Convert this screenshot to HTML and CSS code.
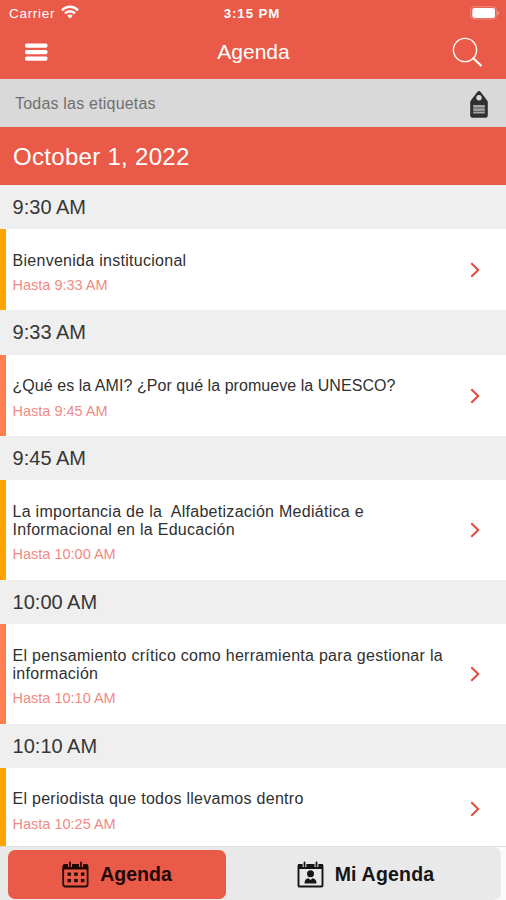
FILE: index.html
```html
<!DOCTYPE html>
<html lang="es">
<head>
<meta charset="utf-8">
<title>Agenda</title>
<link rel="stylesheet" href="styles.css">
</head>
<body>
<div class="app">
  <header class="header">
    <div class="status">
      <div class="carrier"><span>Carrier</span>
        <svg width="18" height="14" viewBox="0 0 18 14" fill="none" stroke="#fff" stroke-width="2.5"><path d="M1 5.3C5.5.5 12.5.5 17 5.3M4 8.4C6.8 5.5 11.2 5.5 14 8.4"/><path d="M9 13.5 6.3 10.7Q9 8.5 11.7 10.7Z" fill="#fff" stroke="none"/></svg>
      </div>
      <div class="clock">3:15 PM</div>
      <svg class="battery" width="30" height="14" viewBox="0 0 30 14"><rect x=".7" y=".7" width="25.6" height="12.4" rx="3.2" fill="none" stroke="#f08a7c"/><rect x="2.3" y="2" width="22.7" height="10" rx="2" fill="#fff"/><path d="M27.5 4.7Q30 7 27.5 9.2Z" fill="#f6b5aa"/></svg>
    </div>
    <div class="navbar">
      <svg class="menu" width="24" height="18" viewBox="0 0 24 18" fill="#fff"><rect x="1" y=".5" width="22.5" height="4.2" rx="1.6"/><rect x="1" y="7" width="22.5" height="4.2" rx="1.6"/><rect x="1" y="13.5" width="22.5" height="4.2" rx="1.6"/></svg>
      <h1 class="title">Agenda</h1>
      <svg class="search" width="31" height="31" viewBox="0 0 31 31" fill="none" stroke="#fff"><circle cx="13" cy="13" r="11.6" stroke-width="1.4"/><path d="M20.8 20.8 29.5 29" stroke-width="2.2"/></svg>
    </div>
  </header>
  <div class="filter"><span>Todas las etiquetas</span>
    <svg width="18" height="27" viewBox="0 0 18 27"><path fill-rule="evenodd" fill="#303030" d="M9 0Q10 0 10.7 1L17 9.2Q17.8 10.2 17.8 11.5V24.5Q17.8 26.8 15.5 26.8H2.5Q.2 26.8.2 24.5V11.5Q.2 10.2 1 9.2L7.3 1Q8 0 9 0ZM9 4A2.7 2.7 0 1 0 9 9.4 2.7 2.7 0 1 0 9 4Z"/><path fill="#a6a6a6" d="M3.2 14h11.6v8.5H3.2z"/><path stroke="#505050" d="M3.2 17h11.6M3.2 20.3h11.6"/></svg>
  </div>
  <main class="agenda">
    <h2 class="date">October 1, 2022</h2>
    <h3 class="time">9:30 AM</h3>
    <article class="item orange"><div><p class="name">Bienvenida institucional</p><p class="until">Hasta 9:33 AM</p></div><svg class="chevron" viewBox="0 0 10 16"><path d="M1.3 1.3 8.2 8 1.3 14.7"/></svg></article>
    <h3 class="time">9:33 AM</h3>
    <article class="item coral"><div><p class="name name-question">¿Qué es la AMI? ¿Por qué la promueve la UNESCO?</p><p class="until">Hasta 9:45 AM</p></div><svg class="chevron" viewBox="0 0 10 16"><path d="M1.3 1.3 8.2 8 1.3 14.7"/></svg></article>
    <h3 class="time">9:45 AM</h3>
    <article class="item orange"><div><p class="name">La importancia de la&nbsp; Alfabetización Mediática e<br>Informacional en la Educación</p><p class="until">Hasta 10:00 AM</p></div><svg class="chevron" viewBox="0 0 10 16"><path d="M1.3 1.3 8.2 8 1.3 14.7"/></svg></article>
    <h3 class="time">10:00 AM</h3>
    <article class="item coral"><div><p class="name">El pensamiento crítico como herramienta para gestionar la<br>información</p><p class="until">Hasta 10:10 AM</p></div><svg class="chevron" viewBox="0 0 10 16"><path d="M1.3 1.3 8.2 8 1.3 14.7"/></svg></article>
    <h3 class="time">10:10 AM</h3>
    <article class="item orange"><div><p class="name">El periodista que todos llevamos dentro</p><p class="until">Hasta 10:25 AM</p></div><svg class="chevron" viewBox="0 0 10 16"><path d="M1.3 1.3 8.2 8 1.3 14.7"/></svg></article>
  </main>
  <footer class="tabs">
    <div class="tabgroup">
      <div class="tab active">
        <svg width="27" height="27" viewBox="0 0 27 27"><rect x="1.2" y="4" width="24.4" height="21.5" rx="2" fill="none" stroke="#210804" stroke-width="1.8"/><path fill="#210804" d="M1 8V5Q1 3 3 3H24Q26 3 26 5V8.5H1Z"/><path stroke="#e95a48" stroke-width="4" d="M8 1v5M19 1v5"/><path stroke="#210804" stroke-width="1.8" stroke-linecap="round" d="M8 1.5v3.5M19 1.5v3.5"/><path stroke="#210804" stroke-width="3.2" stroke-dasharray="3.5 3.2" d="M5.5 13.2h17M5.5 19.6h17"/></svg>
        <span>Agenda</span>
      </div>
      <div class="tab mine">
        <svg width="27" height="27" viewBox="0 0 27 27"><rect x="1.5" y="4" width="24" height="21.5" rx="1" fill="none" stroke="#151515" stroke-width="1.9"/><path fill="#151515" d="M1 3h25v5H1z"/><path stroke="#e9e9e9" stroke-width="3.8" d="M7.5 1v5M19.5 1v5"/><path stroke="#151515" stroke-width="1.8" stroke-linecap="round" d="M7.5 1.5v3.5M19.5 1.5v3.5"/><circle cx="13.5" cy="12.8" r="3.5" fill="#151515"/><path fill="#151515" d="M7.5 22.5Q7.5 17.5 11.5 17.2L13.5 19 15.5 17.2Q19.5 17.5 19.5 22.5Z"/></svg>
        <span>Mi Agenda</span>
      </div>
    </div>
  </footer>
</div>
</body>
</html>
```

FILE: styles.css
```css
* { box-sizing: border-box; }
body { margin: 0; background: #fff; font-family: "Liberation Sans", Arial, sans-serif; }
h1, h2, h3, p { margin: 0; font-weight: 400; }
svg { display: block; flex: none; }
.app { height: 900px; display: flex; flex-direction: column; overflow: hidden; }
.header { height: 78.5px; flex: none; background: #e95a48; color: #fff; }
.status { height: 26px; display: grid; grid-template-columns: 1fr auto 1fr; align-items: center; padding: 0 6px 0 9px; font-size: 13.5px; }
.carrier { display: flex; align-items: center; gap: 6px; letter-spacing: .7px; }
.carrier svg { margin-top: -2px; }
.clock { font-weight: 700; font-size: 13.3px; letter-spacing: .9px; margin: 0 2px 0 -3px; }
.battery { justify-self: end; }
.navbar { height: 52px; display: grid; grid-template-columns: 1fr auto 1fr; align-items: center; padding: 0 23px 0 24px; }
.title { font-size: 21px; line-height: 24px; }
.search { justify-self: end; }
.filter { height: 48.5px; flex: none; display: flex; align-items: center; justify-content: space-between; padding: 3px 18px 0 15px; background: #d9d9d9; color: #707070; font-size: 16px; letter-spacing: .2px; }
.agenda { flex: 1; min-height: 0; overflow: hidden; }
.date { height: 58px; padding-left: 13px; background: #e95a48; color: #fff; font-size: 24px; line-height: 59px; letter-spacing: .3px; }
.time { height: 44.3px; padding-left: 12.6px; background: #efefef; color: #363636; font-size: 20px; line-height: 45.6px; }
.item { display: flex; justify-content: space-between; padding: 22.5px 26px 15.4px 6.5px; border-left: 6px solid; }
.orange { border-color: #ffa400; }
.coral { border-color: #ff7f50; }
.name { color: #303030; font-size: 16px; line-height: 18.3px; letter-spacing: .28px; white-space: nowrap; }
.name-question { letter-spacing: .05px; }
.until { margin-top: 6px; color: #f08a83; font-size: 14.5px; line-height: 19px; }
.chevron { width: 10px; height: 16px; align-self: center; margin-top: -6.5px; fill: none; stroke: #e34b37; stroke-width: 2; }
.tabs { height: 54px; flex: none; padding-right: 5px; background: #fafafa; border-top: 1px solid #dedede; }
.tabgroup { height: 53px; display: flex; padding: 3px 0 1px 8px; background: #e9e9e9; border-radius: 0 8px 8px 0; }
.tab { flex: 1; display: flex; align-items: center; justify-content: center; gap: 11px; color: #151515; font-size: 19.5px; font-weight: 700; }
.tab.active { flex: 0 0 218px; background: #e95a48; border-radius: 7px; color: #210804; }
.tab.mine { padding-left: 4px; letter-spacing: .2px; }
```
